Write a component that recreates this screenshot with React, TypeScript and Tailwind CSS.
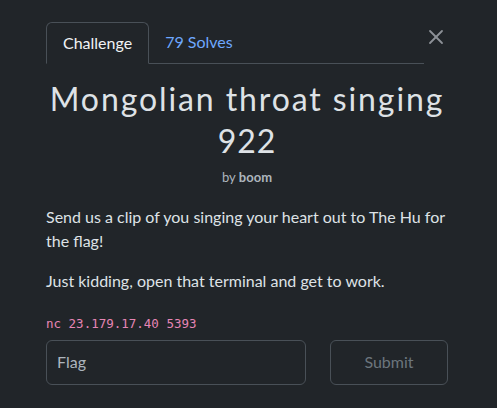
import { X } from 'lucide-react';

export default function App() {
  return (
    <div className="h-[408px] w-[497px] overflow-hidden bg-[#212529] font-['Lato',sans-serif] text-[#dee2e6]">
      <div className="ml-[46px] w-[402px] pt-[22px]">
        {/* Tabs + close */}
        <div className="flex items-start">
          <div className="flex flex-1 border-b border-[#495057]">
            <div className="-mb-px rounded-t-[6px] border border-b-[#212529] border-[#495057] px-4 py-[9px] text-[16px] leading-[22px] text-[#f1f3f5]">
              Challenge
            </div>
            <div className="px-4 py-[9px] text-[16px] leading-[22px] text-[#6ea8fe]">79 Solves</div>
          </div>
          <button className="mt-[3px] text-[#8d9197]" aria-label="Close">
            <X className="h-6 w-6" strokeWidth={1.8} />
          </button>
        </div>

        {/* Title */}
        <h1 className="mt-[13px] text-center text-[32px] leading-[44px] tracking-[1.9px] text-[#dee2e6]">
          Mongolian throat singing
        </h1>
        <div className="text-center text-[32px] leading-[40px] tracking-[1px] text-[#dee2e6]">922</div>
        <div className="mt-[7px] text-center text-[13px] text-[#adb5bd]">
          by <span className="font-bold">boom</span>
        </div>

        {/* Description */}
        <div className="mt-[17px] text-[16px] leading-[24px] text-[#dee2e6]">
          <p>Send us a clip of you singing your heart out to The Hu for the flag!</p>
          <p className="mt-4">Just kidding, open that terminal and get to work.</p>
          <p className="mt-[19px] font-['DejaVu_Sans_Mono',monospace] text-[12.5px] text-[#e685b5]">
            nc 23.179.17.40 5393
          </p>
        </div>

        {/* Flag form */}
        <div className="mt-[4px] flex items-center justify-between">
          <div className="flex h-[45px] w-[260px] items-center rounded-[6px] border border-[#495057] px-[10px] text-[16px] text-[#adb5bd]">
            Flag
          </div>
          <button className="h-[45px] w-[118px] rounded-[6px] border border-[#495057] text-[16px] text-[#6c757d]">
            Submit
          </button>
        </div>
      </div>
    </div>
  );
}
